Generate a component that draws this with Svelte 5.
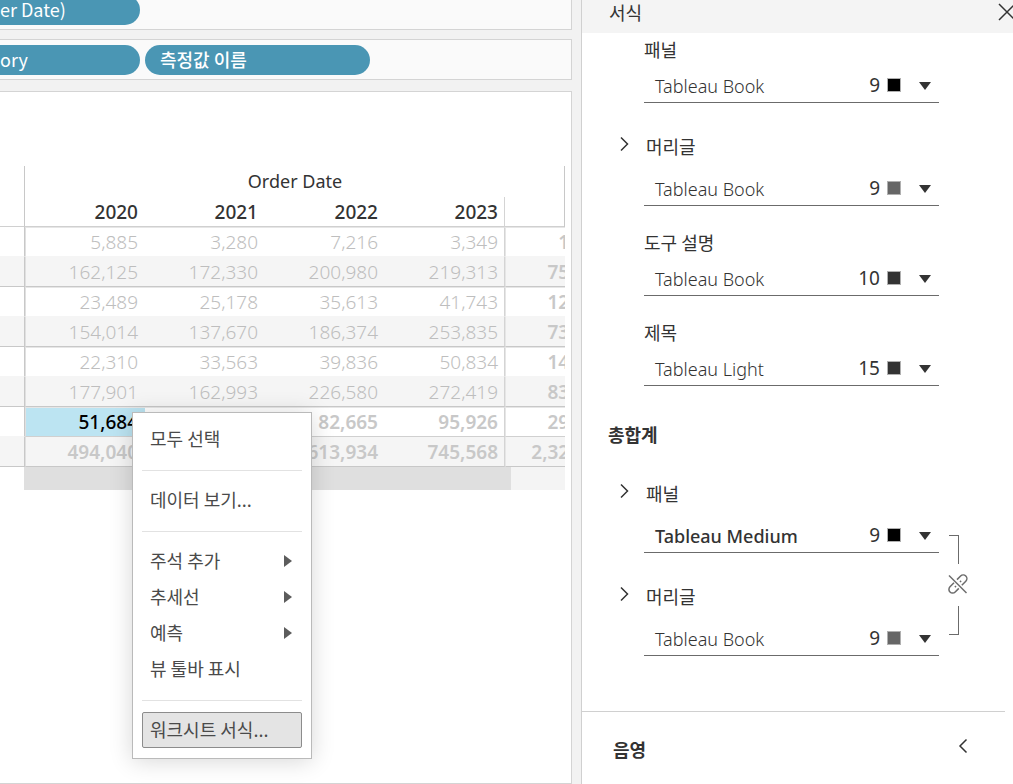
<script>
    const years = [2020, 2021, 2022, 2023];

    const rows = [
        { values: [5885, 3280, 7216, 3349] },
        { values: [162125, 172330, 200980, 219313] },
        { values: [23489, 25178, 35613, 41743] },
        { values: [154014, 137670, 186374, 253835] },
        { values: [22310, 33563, 39836, 50834] },
        { values: [177901, 162993, 226580, 272419] },
        { values: [51684, 62021, 82665, 95926], total: true },
        { values: [494040, 472993, 613934, 745568], total: true }
    ];

    const menu = [
        [{ text: "모두 선택" }],
        [{ text: "데이터 보기..." }],
        [
            { text: "주석 추가", sub: true },
            { text: "추세선", sub: true },
            { text: "예측", sub: true },
            { text: "뷰 툴바 표시" }
        ],
        [{ text: "워크시트 서식...", active: true }]
    ];

    const fonts = [
        { id: "pane", label: "패널", font: "Tableau Book", size: 9, color: "#000000" },
        { id: "header", label: "머리글", font: "Tableau Book", size: 9, color: "#666666", expand: true },
        { id: "tooltip", label: "도구 설명", font: "Tableau Book", size: 10, color: "#333333" },
        { id: "title", label: "제목", font: "Tableau Light", size: 15, color: "#333333" }
    ];

    const totalFonts = [
        { id: "total-pane", label: "패널", font: "Tableau Medium", size: 9, color: "#000000", expand: true },
        { id: "total-header", label: "머리글", font: "Tableau Book", size: 9, color: "#666666", expand: true }
    ];

    let selected = $state("6-0");

    const format = (n) => n.toLocaleString("en-US");
    const sum = (values) => values.reduce((a, b) => a + b, 0);
</script>

{#snippet fontGroup(item)}
    <div class="group" class:expandable={item.expand}>
        <div class="label-row">
            {#if item.expand}
                <button class="icon-button toggle" aria-label="{item.label} 확장">
                    <svg width="10" height="16" viewBox="0 0 10 16"><path d="M2 1.5 L8.5 8 L2 14.5" /></svg>
                </button>
            {/if}
            <span class="label" id="label-{item.id}">{item.label}</span>
        </div>
        <button class="field" aria-haspopup="dialog" aria-labelledby="label-{item.id} value-{item.id}">
            <span class="font-name" class:medium={item.font === "Tableau Medium"} id="value-{item.id}">{item.font}</span>
            <span class="size">{item.size}</span>
            <span class="swatch" style="background: {item.color}"></span>
            <svg class="caret" width="12" height="10" viewBox="0 0 12 10"><path d="M0 2 H12 L6 10 Z" /></svg>
        </button>
    </div>
{/snippet}

<div class="app">
    <main class="workspace">
        <div class="shelf top">
            <button class="pill cut">er Date)</button>
        </div>
        <div class="shelf">
            <button class="pill cut">ory</button>
            <button class="pill measure">측정값 이름</button>
        </div>

        <section class="sheet">
            <div class="view">
                <table>
                    <colgroup>
                        <col class="row-col" />
                        {#each years as year}<col />{/each}
                        <col />
                    </colgroup>
                    <thead>
                        <tr class="field-row">
                            <td></td>
                            <th colspan="5">Order Date</th>
                        </tr>
                        <tr class="year-row">
                            <td></td>
                            {#each years as year}<th scope="col">{year}</th>{/each}
                            <td class="sum"></td>
                        </tr>
                    </thead>
                    <tbody>
                        {#each rows as row, i}
                            <tr class:total={row.total}>
                                <td class="row-head"></td>
                                {#each row.values as value, j}
                                    <td class:selected={selected === `${i}-${j}`} onclick={() => (selected = `${i}-${j}`)}>{format(value)}</td>
                                {/each}
                                <td class="sum">{format(sum(row.values))}</td>
                            </tr>
                        {/each}
                    </tbody>
                </table>
                <div class="scrollbar"><div class="thumb"></div></div>
            </div>
        </section>

        <div class="menu" role="menu">
            {#each menu as section, i}
                {#if i > 0}<hr />{/if}
                {#each section as item}
                    <button class="menu-item" class:active={item.active} role="menuitem">
                        <span>{item.text}</span>
                        {#if item.sub}
                            <svg width="8" height="12" viewBox="0 0 8 12"><path d="M0 0 L8 6 L0 12 Z" /></svg>
                        {/if}
                    </button>
                {/each}
            {/each}
        </div>
    </main>

    <aside class="panel">
        <header>
            <span>서식</span>
            <button class="icon-button close" aria-label="닫기">
                <svg width="18" height="18" viewBox="0 0 18 18"><path d="M1 1 L17 17 M17 1 L1 17" /></svg>
            </button>
        </header>

        <div class="fonts">
            {#each fonts as item}
                {@render fontGroup(item)}
            {/each}
        </div>

        <h2>총합계</h2>
        <div class="linked">
            <div class="linked-groups">
                {#each totalFonts as item}
                    {@render fontGroup(item)}
                {/each}
            </div>
            <div class="bracket">
                <span class="arm upper"></span>
                <button class="icon-button link" aria-label="연결 해제">
                    <svg width="20" height="20" viewBox="0 0 20 20">
                        <path d="M9 5.6 L12.6 2 A3.2 3.2 0 0 1 17.8 7.2 L13.8 11.2" />
                        <path d="M6 8.8 L2 12.8 A3.2 3.2 0 0 0 7.2 18 L10.8 14.4" />
                        <path d="M6.9 13.1 L8 12 M12 8 L13.1 6.9" />
                        <path d="M1 1.5 L18.5 19" />
                    </svg>
                </button>
                <span class="arm lower"></span>
            </div>
        </div>

        <div class="shading">
            <h2>음영</h2>
            <button class="icon-button" aria-label="음영 펼치기">
                <svg width="10" height="16" viewBox="0 0 10 16"><path d="M8.5 1.5 L2 8 L8.5 14.5" /></svg>
            </button>
        </div>
    </aside>
</div>

<style>
    :global(body) {
        background: #fff;
    }

    .app {
        display: grid;
        grid-template-columns: minmax(0, 1fr) 432px;
        height: 100vh;
        overflow: hidden;
        font-family: "Noto Sans CJK KR", sans-serif;
        font-size: 18px;
        line-height: 24px;
        color: #333;
    }

    .app :global(*) {
        box-sizing: border-box;
    }

    button {
        margin: 0;
        padding: 0;
        border: 0;
        background: none;
        font: inherit;
        color: inherit;
        text-align: left;
    }

    svg {
        display: block;
        flex: none;
    }

    .icon-button {
        display: flex;
        flex: none;
    }

    .icon-button svg {
        fill: none;
        stroke: #333;
        stroke-width: 1.5;
    }

    /* workspace */
    .workspace {
        position: relative;
        display: flex;
        flex-direction: column;
        min-height: 0;
        padding-right: 9px;
        background: #f2f2f2;
    }

    .shelf {
        display: flex;
        flex: none;
        align-items: flex-end;
        gap: 5px;
        height: 41px;
        margin-bottom: 11px;
        padding-bottom: 4px;
        border: 1px solid #d4d4d4;
        border-left: 0;
        background: #fafafa;
    }

    .shelf.top {
        height: 30px;
        margin-bottom: 9px;
        border-top: 0;
        overflow: hidden;
    }

    .pill {
        flex: none;
        width: 225px;
        height: 30px;
        padding: 0 0 2px 15px;
        border-radius: 15px;
        background: #4a96b4;
        color: #fff;
    }

    .pill.cut {
        width: 140px;
        padding-left: 0;
        border-radius: 0 15px 15px 0;
    }

    .pill.measure {
        font-weight: 500;
    }

    .sheet {
        flex: 1;
        padding: 74px 6px 0 0;
        border: 1px solid #d4d4d4;
        border-left: 0;
        background: #fff;
    }

    .view {
        position: relative;
        overflow: hidden;
    }

    .view::after {
        content: "";
        position: absolute;
        top: 0;
        right: 0;
        width: 1px;
        height: 61px;
        background: #c8c8c8;
    }

    table {
        width: 625px;
        table-layout: fixed;
        border-collapse: separate;
        border-spacing: 0;
        font-family: "Noto Sans", sans-serif;
        font-size: 19px;
        line-height: 24px;
    }

    .row-col {
        width: 25px;
    }

    th,
    td {
        height: 30px;
        padding: 0 7px 0 0;
        border-bottom: 1px solid #f5f5f5;
        text-align: right;
        font-weight: 300;
        color: #bebebe;
    }

    tr > td:first-child {
        border-right: 1px solid #c8c8c8;
    }

    tr > :nth-child(5) {
        padding-right: 6px;
        border-right: 1px solid #d4d4d4;
    }

    .field-row th,
    .field-row td {
        height: 31px;
        border-bottom: 0;
    }

    .field-row th {
        padding: 0 60px 1px 0;
        text-align: center;
        font-size: 18px;
        font-weight: 400;
        color: #333;
    }

    .year-row th,
    .year-row td {
        border-bottom-color: #d0d0d0;
    }

    .year-row th {
        font-weight: 500;
        color: #333;
    }

    tbody .sum {
        border-left: 1px solid #e6e6e6;
        font-weight: 600;
        color: #c8c8c8;
    }

    tbody tr:nth-child(even) td {
        border-bottom-color: #c8c8c8;
        background: #f5f5f5;
    }

    tbody tr:nth-child(odd) td:not(.row-head) {
        border-top: 1px solid #e6e6e6;
    }

    tbody .row-head + td {
        border-left: 1px solid #e0e0e0;
    }

    tbody .total td {
        font-weight: 600;
        color: #c8c8c8;
    }

    tbody .total:nth-child(odd) td:not(.row-head) {
        border-bottom-color: #d0d0d0;
    }

    tbody .total td.selected {
        border-top-color: #bce4f2;
        background: #bce4f2;
        font-weight: 500;
        color: #000;
    }

    .scrollbar {
        height: 23px;
        margin-left: 24px;
        background: #f4f4f4;
    }

    .thumb {
        width: 90%;
        height: 100%;
        background: #dfdfdf;
    }

    /* context menu */
    .menu {
        position: absolute;
        top: 412px;
        left: 132px;
        width: 180px;
        padding: 8px 9px 10px;
        border: 1px solid #bababa;
        background: #fff;
        box-shadow: 0 2px 22px rgba(0, 0, 0, 0.16);
        color: #4a4a4a;
    }

    .menu-item {
        display: flex;
        align-items: center;
        justify-content: space-between;
        width: 100%;
        height: 36px;
        padding: 0 9px 0 7px;
        border: 1px solid transparent;
        border-radius: 2px;
        white-space: nowrap;
    }

    .menu-item span {
        padding-bottom: 2px;
    }

    .menu-item.active {
        border-color: #8c8c8c;
        background: #e4e4e4;
    }

    .menu-item svg {
        fill: #5c5c5c;
    }

    .menu hr {
        height: 1px;
        margin: 13px 0 11px;
        border: 0;
        background: #e2e2e2;
    }

    /* format panel */
    .panel {
        border-left: 1px solid #d0d0d0;
        background: #fff;
        overflow: hidden;
    }

    header {
        display: flex;
        justify-content: space-between;
        height: 33px;
        padding-left: 27px;
        background: #f4f4f4;
    }

    .close {
        margin: 3px -3px 0 0;
        align-self: flex-start;
    }

    .fonts {
        padding: 5px 74px 0 36px;
    }

    .label-row {
        display: flex;
        align-items: center;
        height: 24px;
        margin-bottom: 8px;
        padding-left: 26px;
    }

    .label {
        padding-bottom: 2px;
    }

    .group + .group {
        margin-top: 25px;
    }

    .group + .group.expandable {
        margin-top: 32px;
    }

    .expandable .label-row {
        gap: 17px;
        margin-bottom: 14px;
        padding-left: 1px;
    }

    .toggle {
        padding-bottom: 6px;
    }

    .field {
        display: flex;
        align-items: center;
        width: calc(100% - 26px);
        height: 33px;
        margin-left: 26px;
        padding: 0 8px 2px 11px;
        border-bottom: 1px solid #6b6b6b;
        font-family: "Noto Sans", sans-serif;
    }

    .font-name {
        flex: 1;
        padding-top: 2px;
        font-weight: 300;
    }

    .font-name.medium {
        font-weight: 500;
    }

    .size {
        padding-bottom: 1px;
        font-size: 19px;
    }

    .swatch {
        width: 14px;
        height: 14px;
        margin: 0 18px 0 7px;
        border: 1px solid #b0b0b0;
    }

    .caret {
        fill: #333;
    }

    h2 {
        margin: 0;
        font-size: 18px;
        font-weight: 700;
        line-height: 24px;
    }

    .panel > h2 {
        margin: 36px 0 36px 26px;
    }

    .linked {
        display: flex;
        gap: 9px;
        padding: 0 45px 0 36px;
    }

    .linked-groups {
        flex: 1;
    }

    .bracket {
        display: flex;
        flex-direction: column;
        justify-content: space-between;
        width: 20px;
        padding: 53px 0 21px;
    }

    .arm {
        width: 10px;
        height: 29px;
        margin-left: 1px;
        border-right: 1px solid #6b6b6b;
    }

    .upper {
        border-top: 1px solid #6b6b6b;
    }

    .lower {
        border-bottom: 1px solid #6b6b6b;
    }

    .link {
        padding-bottom: 2px;
    }

    .link svg {
        stroke: #6b6b6b;
    }

    .shading {
        display: flex;
        align-items: center;
        justify-content: space-between;
        height: 75px;
        margin: 55px 8px 0 0;
        padding: 0 37px 0 31px;
        border-top: 1px solid #d0d0d0;
    }

    .shading .icon-button {
        padding-bottom: 6px;
    }
</style>
